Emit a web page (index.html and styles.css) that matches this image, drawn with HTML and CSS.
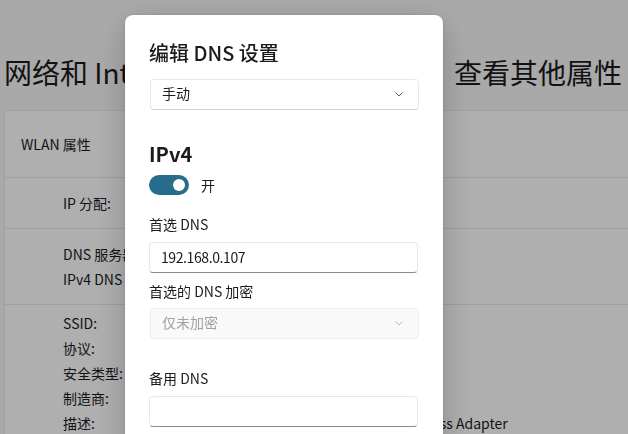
FILE: index.html
```html
<!DOCTYPE html>
<html lang="zh-CN">
<head>
    <meta charset="UTF-8">
    <title>WLAN 属性</title>
    <link rel="stylesheet" href="styles.css">
</head>
<body>
    <div class="page">
        <h1 class="crumbs">
            <span>网络和 Internet</span>
            <span class="sep">›</span>
            <span>WLAN</span>
            <span class="sep">›</span>
            <span>查看其他属性</span>
        </h1>

        <div class="card">
            <div class="row head">WLAN 属性</div>
            <div class="row">
                <div class="pair"><span class="key">IP 分配:</span><span class="val">自动(DHCP)</span></div>
            </div>
            <div class="row">
                <div class="pair"><span class="key">DNS 服务器分配:</span><span class="val">手动</span></div>
                <div class="pair"><span class="key">IPv4 DNS 服务器:</span><span class="val">192.168.0.107</span></div>
            </div>
            <div class="row last">
                <div class="pair"><span class="key">SSID:</span><span class="val">HomeNet</span></div>
                <div class="pair"><span class="key">协议:</span><span class="val">Wi-Fi 5 (802.11ac)</span></div>
                <div class="pair"><span class="key">安全类型:</span><span class="val">WPA2-个人</span></div>
                <div class="pair"><span class="key">制造商:</span><span class="val">Intel Corporation</span></div>
                <div class="pair"><span class="key">描述:</span><span class="val">Intel(R) Wi-Fi 6E AX211 Wireless Adapter</span></div>
            </div>
        </div>
    </div>

    <div class="smoke"></div>

    <div class="dialog">
        <h2>编辑 DNS 设置</h2>
        <div class="combo">
            <span>手动</span>
            <svg width="8" height="5" viewBox="0 0 8 5"><polyline points="0.5,0.5 4,4 7.5,0.5" fill="none" stroke="#5c5c5c" stroke-width="1"/></svg>
        </div>

        <h3>IPv4</h3>
        <div class="switch-row">
            <span class="switch"><span class="knob"></span></span>
            <span>开</span>
        </div>

        <label class="field-label">首选 DNS</label>
        <div class="textbox">192.168.0.107</div>

        <label class="field-label second">首选的 DNS 加密</label>
        <div class="combo disabled">
            <span>仅未加密</span>
            <svg width="8" height="5" viewBox="0 0 8 5"><polyline points="0.5,0.5 4,4 7.5,0.5" fill="none" stroke="#b8b8b8" stroke-width="1"/></svg>
        </div>

        <label class="field-label alt">备用 DNS</label>
        <div class="textbox"></div>
    </div>
</body>
</html>
```

FILE: styles.css
```css
body {
    margin: 0;
    background-color: #f3f3f3;
    color: #1b1b1b;
    font-family: "Segoe UI", "Noto Sans CJK SC", sans-serif;
    font-size: 14px;
    overflow: hidden;
    height: 434px;
}
.page {
    padding: 52px 0 0 4px;
}
.crumbs {
    margin: 0;
    display: flex;
    gap: 20px;
    font-size: 28px;
    font-weight: 400;
    line-height: 40px;
    white-space: nowrap;
}
.crumbs .sep {
    width: 49px;
    text-align: center;
    color: #6a6a6a;
}
.card {
    margin-top: 18px;
    background-color: #fbfbfb;
    border: 1px solid #e5e5e5;
    border-right: none;
    border-radius: 4px 0 0 0;
}
.row {
    border-top: 1px solid #e5e5e5;
    padding: 15px 0 15px 58px;
}
.row.head {
    border-top: none;
    padding: 23px 16px 23px 16px;
    line-height: 20px;
}
.row.last {
    padding-top: 8px;
}
.pair {
    display: grid;
    grid-template-columns: 187px auto;
    line-height: 20px;
    margin-bottom: 5px;
    white-space: nowrap;
}
.row .pair:last-child {
    margin-bottom: 0;
}
.smoke {
    position: fixed;
    inset: 0;
    background: rgba(0, 0, 0, 0.3);
}
.dialog {
    position: fixed;
    left: 125px;
    top: 15px;
    width: 318px;
    height: 440px;
    box-sizing: border-box;
    padding: 24px 24px 0 24px;
    background: #ffffff;
    border-radius: 8px;
    box-shadow: 0 8px 32px rgba(0, 0, 0, 0.22), 0 0 2px rgba(0, 0, 0, 0.2);
}
.dialog h2 {
    margin: 0 0 12px 0;
    font-size: 20px;
    font-weight: 500;
    line-height: 28px;
}
.combo {
    height: 31px;
    box-sizing: border-box;
    margin-left: 1px;
    width: 269px;
    display: flex;
    align-items: center;
    justify-content: space-between;
    padding: 0 15px 0 11px;
    border: 1px solid #e8e8e8;
    border-bottom-color: #d2d2d2;
    border-radius: 4px;
    background: #ffffff;
}
.combo span {
    margin-top: -3px;
}
.combo.disabled {
    background: #f9f9f9;
    border-color: #ededed;
    color: #a3a3a3;
}
.dialog h3 {
    margin: 30px 0 7px 0;
    font-size: 20px;
    font-weight: 600;
    line-height: 28px;
}
.switch-row {
    display: flex;
    align-items: center;
    gap: 12px;
    height: 20px;
}
.switch {
    width: 40px;
    height: 20px;
    border-radius: 10px;
    background: #276c8b;
    display: flex;
    align-items: center;
    justify-content: flex-end;
    padding-right: 4px;
    box-sizing: border-box;
}
.knob {
    width: 12px;
    height: 12px;
    border-radius: 50%;
    background: #ffffff;
}
.field-label {
    display: block;
    margin: 19px 0 8px 0;
    line-height: 20px;
}
.field-label.second {
    margin: 8px 0 7px 0;
}
.field-label.alt {
    margin: 29px 0 8px 0;
}
.textbox {
    height: 31px;
    box-sizing: border-box;
    width: 269px;
    padding: 0 11px;
    line-height: 28px;
    letter-spacing: -0.4px;
    border: 1px solid #e8e8e8;
    border-bottom: 1px solid #8a8a8a;
    border-radius: 4px;
    background: #ffffff;
}
```
